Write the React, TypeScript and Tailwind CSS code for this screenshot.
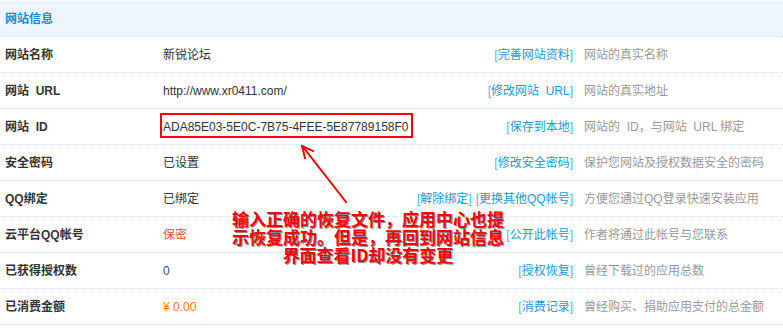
const rows = [
  {
    label: "网站名称",
    value: <span>新锐论坛</span>,
    actions: ["完善网站资料"],
    desc: "网站的真实名称",
  },
  {
    label: "网站  URL",
    value: <span>http://www.xr0411.com/</span>,
    actions: ["修改网站  URL"],
    desc: "网站的真实地址",
  },
  {
    label: "网站  ID",
    value: <span>ADA85E03-5E0C-7B75-4FEE-5E87789158F0</span>,
    actions: ["保存到本地"],
    desc: "网站的  ID，与网站  URL 绑定",
  },
  {
    label: "安全密码",
    value: <span>已设置</span>,
    actions: ["修改安全密码"],
    desc: "保护您网站及授权数据安全的密码",
  },
  {
    label: "QQ绑定",
    value: <span>已绑定</span>,
    actions: ["解除绑定", "更换其他QQ帐号"],
    desc: "方便您通过QQ登录快速安装应用",
  },
  {
    label: "云平台QQ帐号",
    value: <span className="text-[#e8513a]">保密</span>,
    actions: ["公开此帐号"],
    desc: "作者将通过此帐号与您联系",
  },
  {
    label: "已获得授权数",
    value: <span className="text-[#3a4a6a]">0</span>,
    actions: ["授权恢复"],
    desc: "曾经下载过的应用总数",
  },
  {
    label: "已消费金额",
    value: <span className="text-[#ff7a00]">¥ 0.00</span>,
    actions: ["消费记录"],
    desc: "曾经购买、捐助应用支付的总金额",
  },
];

export default function App() {
  return (
    <div className="relative h-[329px] w-[783px] overflow-hidden bg-white font-['Liberation_Sans','Noto_Sans_CJK_SC',sans-serif] text-[12px] text-[#333]">
      <div className="flex h-[37px] items-center border-t border-b border-t-white border-b-[#c9e3f5] border-dotted bg-[#eef5fd] pl-[5px] font-bold text-[#0d8ec9]">
        网站信息
      </div>
      {rows.map((row) => (
        <div
          key={row.label}
          className="flex h-[36px] items-center border-b border-dotted border-[#c9e3f5]"
        >
          <div className="w-[163px] shrink-0 whitespace-pre pl-[5px] font-bold text-[#333]">
            {row.label}
          </div>
          <div className="min-w-0 flex-1 whitespace-pre">{row.value}</div>
          <div className="flex shrink-0 justify-end gap-[4px] whitespace-pre text-[#1d9ad6]">
            {row.actions.map((a) => (
              <span key={a}>
                <span className="text-[#4fb6e6]">[</span>
                {a}
                <span className="text-[#4fb6e6]">]</span>
              </span>
            ))}
          </div>
          <div className="w-[210px] shrink-0 whitespace-pre pl-[11px] text-[#999]">
            {row.desc}
          </div>
        </div>
      ))}

      <div className="pointer-events-none absolute left-[160px] top-[113px] h-[25px] w-[253px] border-2 border-[#ff0000]" />

      <svg
        className="absolute left-0 top-0"
        width="783"
        height="329"
        viewBox="0 0 783 329"
      >
        <g stroke="#ff0000" strokeWidth="2" fill="none" strokeLinecap="square">
          <line x1="346" y1="202" x2="303" y2="147" />
          <line x1="302" y1="146" x2="305" y2="158" />
          <line x1="302" y1="146" x2="313" y2="151" />
        </g>
      </svg>

      <div className="absolute left-[228px] top-[210px] w-[280px] text-center font-['Noto_Sans_CJK_SC',sans-serif] text-[17px] font-bold leading-[18px] text-[#ff0000] [text-shadow:1px_1px_0_#8a8a8a]">
        输入正确的恢复文件，应用中心也提
        <br />
        示恢复成功。但是，再回到网站信息
        <br />
        界面查看ID却没有变更
      </div>
    </div>
  );
}
